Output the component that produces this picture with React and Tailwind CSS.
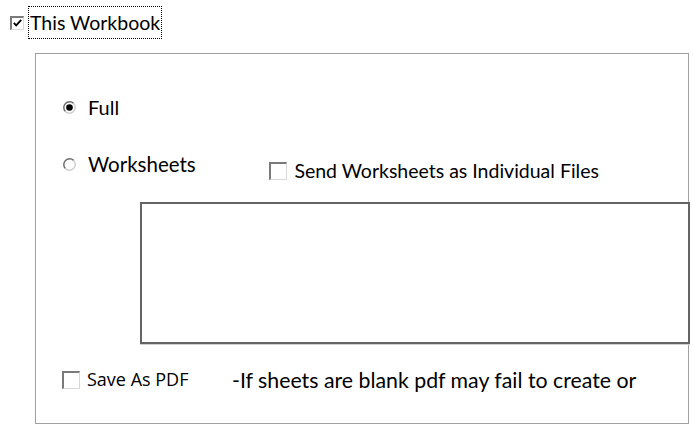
import React from 'react';

const font = { fontFamily: 'Lato, "Open Sans", sans-serif' };

const CheckBox = ({ checked = false }) => (
    <div className='w-[18px] h-[18px] shrink-0 bg-white border-t-2 border-l-2 border-t-[#7a7a7a] border-l-[#7a7a7a] border-r border-b border-r-[#d8d8d8] border-b-[#d8d8d8] flex items-center justify-center'>
        {checked && (
            <svg width='10' height='9' viewBox='0 0 10 9'>
                <path d='M1 4.5 L3.5 7.5 L9 1' stroke='#000' strokeWidth='2' fill='none' />
            </svg>
        )}
    </div>
);

const Radio = ({ checked = false }) => (
    <svg width='13' height='13' viewBox='0 0 13 13' className='shrink-0'>
        <circle cx='6.5' cy='6.5' r='5.8' fill='#fff' />
        <path d='M10.6 2.4 A5.8 5.8 0 0 0 2.4 10.6' stroke='#6e6e6e' strokeWidth='1.5' fill='none' />
        <path d='M2.4 10.6 A5.8 5.8 0 0 0 10.6 2.4' stroke='#d0d0d0' strokeWidth='1.5' fill='none' />
        {checked && <circle cx='6.5' cy='6.5' r='3.3' fill='#000' />}
    </svg>
);

const App = () => {
    return (
        <div className='w-[693px] h-[434px] bg-white overflow-hidden text-black' style={font}>
            {/* Workbook toggle */}
            <div className='flex items-center mt-[6px] ml-[10px] h-[33px]'>
                <div className='w-[14px] h-[14px] border-t-2 border-l-2 border-t-[#7a7a7a] border-l-[#7a7a7a] border-r border-b border-r-[#dcdcdc] border-b-[#dcdcdc] flex items-center justify-center'>
                    <svg width='9' height='8' viewBox='0 0 9 8'>
                        <path d='M0.8 3.8 L3.2 6.4 L8.2 0.8' stroke='#000' strokeWidth='1.8' fill='none' />
                    </svg>
                </div>
                <div className='ml-[4px] h-[33px] px-[1px] border border-dotted border-black flex items-center text-[19.5px] leading-none'>
                    This Workbook
                </div>
            </div>

            {/* Group box */}
            <div className='ml-[35px] mt-[14px] w-[654px] h-[371px] border border-[#a0a0a0]'>
                <div className='mt-[43px] ml-[27px] h-[20px] flex items-center'>
                    <Radio checked />
                    <span className='ml-[12px] text-[20px] leading-none'>Full</span>
                </div>

                <div className='mt-[31px] h-[45px] flex'>
                    <div className='w-[226px] pl-[27px] pt-[5px] h-[20px] flex items-center mt-[4px]'>
                        <Radio />
                        <span className='ml-[12px] text-[20.5px] leading-none'>Worksheets</span>
                    </div>
                    <div className='w-[431px] h-[45px] bg-white flex items-center pl-[9px]'>
                        <CheckBox />
                        <span className='ml-[7px] text-[19.5px] leading-none'>Send Worksheets as Individual Files</span>
                    </div>
                </div>

                <div className='mt-[9px] ml-[104px] w-[550px] h-[142px] bg-white border-2 border-[#646464] shadow-[0_1px_0_#d0d0d0]'></div>

                <div className='mt-[26px] ml-[26px] flex items-center h-[20px]'>
                    <div className='self-start mt-[1px]'>
                        <CheckBox />
                    </div>
                    <span className='ml-[7px] w-[145px] mb-[2px] text-[18px] leading-none' style={{ fontFamily: '"Open Sans", sans-serif' }}>Save As PDF</span>
                    <span className='mt-[1px] text-[21.3px] leading-none'>-If sheets are blank pdf may fail to create or</span>
                </div>
            </div>
        </div>
    );
};

export default App;
